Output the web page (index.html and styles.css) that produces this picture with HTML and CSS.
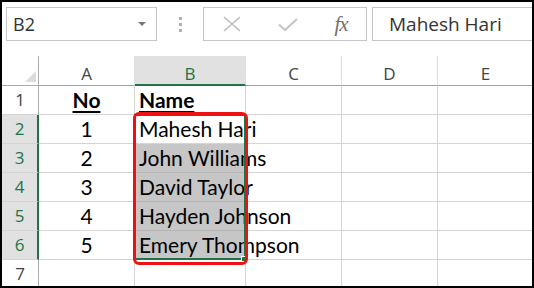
FILE: index.html
```html
<!DOCTYPE html>
<html lang="en">
<head>
    <meta charset="UTF-8">
    <title>Excel - Names</title>
    <link rel="stylesheet" href="styles.css">
</head>
<body>
    <div class="frame">
        <div class="toolbar">
            <div class="namebox"><span>B2</span><span class="caret"></span></div>
            <div class="dots"><i></i><i></i><i></i></div>
            <div class="fbuttons">
                <div class="fbtn">
                    <svg width="18" height="16" viewBox="0 0 18 16"><path d="M1 1 L17 15 M17 1 L1 15" stroke="#bdbdbd" stroke-width="1.6" fill="none"/></svg>
                </div>
                <div class="fbtn">
                    <svg width="20" height="13" viewBox="0 0 20 13"><path d="M1 6.5 L7 12 L19 1" stroke="#c6c6c6" stroke-width="2.2" fill="none"/></svg>
                </div>
                <div class="fbtn fx">fx</div>
            </div>
            <div class="formula">Mahesh Hari</div>
        </div>

        <div class="sheet">
            <div class="corner"><span class="tri"></span></div>
            <div class="colhead">A</div>
            <div class="colhead sel">B</div>
            <div class="colhead">C</div>
            <div class="colhead">D</div>
            <div class="colhead">E</div>

            <div class="rowhead">1</div>
            <div class="cell center bold">No</div>
            <div class="cell bold">Name</div>
            <div class="cell"></div>
            <div class="cell"></div>
            <div class="cell"></div>

            <div class="rowhead sel">2</div>
            <div class="cell center">1</div>
            <div class="cell">Mahesh Hari</div>
            <div class="cell"></div>
            <div class="cell"></div>
            <div class="cell"></div>

            <div class="rowhead sel">3</div>
            <div class="cell center">2</div>
            <div class="cell picked">John Williams</div>
            <div class="cell"></div>
            <div class="cell"></div>
            <div class="cell"></div>

            <div class="rowhead sel">4</div>
            <div class="cell center">3</div>
            <div class="cell picked">David Taylor</div>
            <div class="cell"></div>
            <div class="cell"></div>
            <div class="cell"></div>

            <div class="rowhead sel">5</div>
            <div class="cell center">4</div>
            <div class="cell picked">Hayden Johnson</div>
            <div class="cell"></div>
            <div class="cell"></div>
            <div class="cell"></div>

            <div class="rowhead sel">6</div>
            <div class="cell center">5</div>
            <div class="cell picked">Emery Thompson</div>
            <div class="cell"></div>
            <div class="cell"></div>
            <div class="cell"></div>

            <div class="rowhead">7</div>
            <div class="cell"></div>
            <div class="cell"></div>
            <div class="cell"></div>
            <div class="cell"></div>
            <div class="cell"></div>

            <div class="selection"></div>
            <div class="handle"></div>
            <div class="mark"></div>
        </div>
    </div>
</body>
</html>
```

FILE: styles.css
```css
body {
    margin: 0;
    background: #fff;
}
.frame {
    width: 534px;
    height: 288px;
    box-sizing: border-box;
    border: 2px solid #000;
    overflow: hidden;
    background: #fff;
}

/* formula bar */
.toolbar {
    height: 54px;
    box-sizing: border-box;
    display: flex;
    align-items: flex-start;
    padding: 5px 0 0 4px;
}
.namebox {
    width: 151px;
    height: 34px;
    box-sizing: border-box;
    border: 1px solid #c6c6c6;
    display: flex;
    align-items: center;
    justify-content: space-between;
    padding: 0 10px 0 6px;
    font: 18px "Open Sans", sans-serif;
    line-height: 32px;
    color: #333;
}
.caret {
    width: 0;
    height: 0;
    border-left: 4px solid transparent;
    border-right: 4px solid transparent;
    border-top: 4px solid #777;
}
.dots {
    width: 46px;
    height: 34px;
    display: flex;
    flex-direction: column;
    align-items: center;
    justify-content: center;
    gap: 3px;
}
.dots i {
    display: block;
    width: 3px;
    height: 3px;
    background: #b0b0b0;
}
.fbuttons {
    width: 164px;
    height: 34px;
    box-sizing: border-box;
    border: 1px solid #c6c6c6;
    display: flex;
    align-items: center;
}
.fbtn {
    width: 56px;
    display: flex;
    justify-content: center;
    align-items: center;
}
.fx {
    width: 50px;
    font: italic 21px "Liberation Serif", serif;
    color: #707070;
    letter-spacing: -1px;
}
.formula {
    flex: 1;
    height: 34px;
    box-sizing: border-box;
    margin-left: 5px;
    border: 1px solid #c6c6c6;
    border-right: none;
    padding-left: 16px;
    font: 19px "Open Sans", sans-serif;
    line-height: 32px;
    color: #333;
    white-space: nowrap;
}

/* sheet */
.sheet {
    position: relative;
    display: grid;
    grid-template-columns: 37px 96px 111px 96px 96px 96px;
    grid-template-rows: 30px repeat(7, 29px);
}
.sheet > div {
    box-sizing: border-box;
}
.corner {
    position: relative;
    border-right: 1px solid #ababab;
    border-bottom: 1px solid #ababab;
}
.tri {
    position: absolute;
    right: 2px;
    bottom: 3px;
    width: 0;
    height: 0;
    border-left: 11px solid transparent;
    border-bottom: 11px solid #dcdcdc;
}
.colhead {
    border-right: 1px solid #dedede;
    border-bottom: 1px solid #a0a0a0;
    text-align: center;
    font: 17px "Open Sans", sans-serif;
    line-height: 23px;
    padding-top: 6px;
    color: #444;
}
.colhead.sel {
    background: #e1e1e1;
    color: #217346;
    border-bottom: 2px solid #217346;
}
.rowhead {
    border-right: 1px solid #ababab;
    border-bottom: 1px solid #d4d4d4;
    text-align: center;
    font: 17px "Open Sans", sans-serif;
    line-height: 28px;
    color: #444;
}
.rowhead.sel {
    background: #e1e1e1;
    color: #217346;
    border-right: 2px solid #217346;
}
.cell {
    border-right: 1px solid #d4d4d4;
    border-bottom: 1px solid #d4d4d4;
    font: 21px Lato, sans-serif;
    line-height: 28px;
    padding-left: 4px;
    color: #000;
    white-space: nowrap;
    overflow: visible;
}
.cell.center {
    text-align: center;
    padding-left: 0;
}
.cell.bold {
    font-weight: bold;
    text-decoration: underline;
    text-underline-offset: 3px;
}
.cell.picked {
    background: #c6c6c6;
    border-bottom-color: #b4b4b4;
}

/* selection frame and annotation lie over the cells */
.selection {
    position: absolute;
    left: 132px;
    top: 58px;
    width: 112px;
    height: 146px;
    border: 2px solid #217346;
}
.handle {
    position: absolute;
    left: 239px;
    top: 200px;
    width: 6px;
    height: 6px;
    background: #217346;
    border: 1px solid #fff;
}
.mark {
    position: absolute;
    left: 131px;
    top: 56px;
    width: 115px;
    height: 153px;
    border: 3px solid #ee1111;
    border-radius: 6px;
}
```
